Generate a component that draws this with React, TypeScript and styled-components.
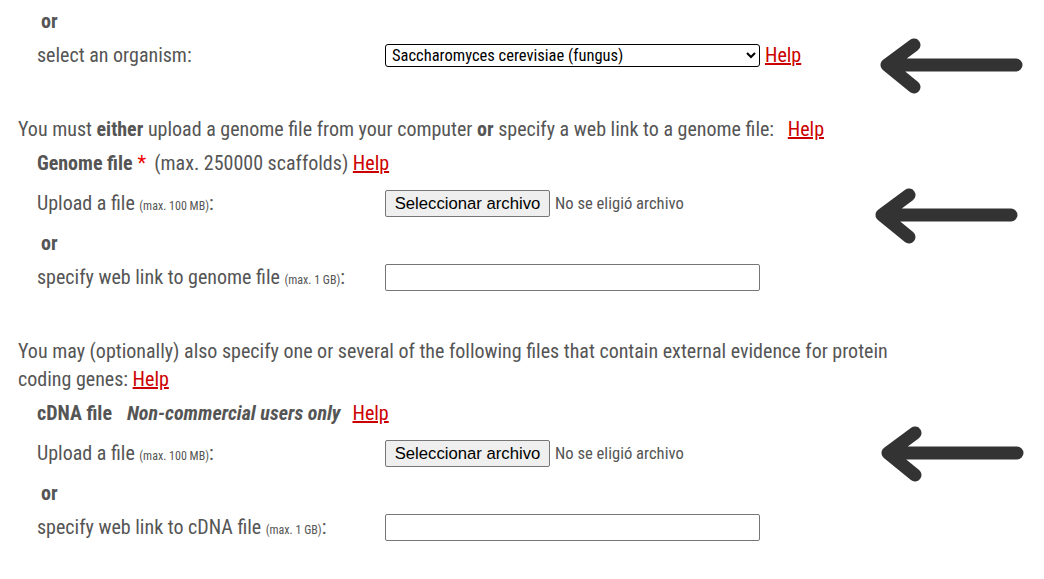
import React from "react";
import styled, { createGlobalStyle } from "styled-components";

const Global = createGlobalStyle`
  html, body { margin: 0; padding: 0; background: #fff; }
  body { font-family: "Roboto", "Liberation Sans", sans-serif; }
`;

const Page = styled.div`
  position: relative;
  width: 1044px;
  height: 579px;
  overflow: hidden;
  padding: 4px 0 0 18px;
  box-sizing: border-box;
  font-family: "Roboto", sans-serif;
  font-stretch: 80%;
  font-size: 20px;
  color: #555;
`;

const Form = styled.div`
  width: 880px;
  display: flex;
  flex-direction: column;
`;

const Row = styled.div<{ $spaced?: boolean }>`
  display: grid;
  grid-template-columns: 348px 1fr;
  align-items: center;
  height: 34px;
  padding-left: 19px;
  margin: ${(p) => (p.$spaced ? "6px 0" : "0")};
`;

const Heading = styled.div`
  display: flex;
  align-items: center;
  height: 34px;
  padding-left: 19px;
  white-space: pre;
`;

const Or = styled.div`
  font-weight: 700;
  padding-left: 4px;
`;

const Label = styled.span``;

const Small = styled.span`
  font-size: 12px;
`;

const Para = styled.p<{ $top: number }>`
  margin: ${(p) => p.$top}px 0 3px;
  line-height: 28px;
`;

const Strong = styled.b`
  font-weight: 700;
`;

const Help = styled.a`
  color: #cc0000;
  text-decoration: underline;
  cursor: pointer;
`;

const Star = styled.span`
  color: #e00;
  margin: 0 8px 0 5px;
`;

const Em = styled.i`
  font-weight: 700;
  margin: 0 12px 0 15px;
`;

const Control = styled.div`
  display: flex;
  align-items: center;
  gap: 5px;
`;

const Select = styled.select`
  width: 375px;
  height: 23px;
  font-family: "Roboto", sans-serif;
  font-stretch: 80%;
  font-size: 16.5px;
  color: #000;
  border: 1.5px solid #000;
  border-radius: 3px;
  background: #fff;
  padding: 0 2px;
`;

const FileButton = styled.button`
  height: 27px;
  width: 165px;
  padding: 1px 0 0;
  font-family: "Liberation Sans", Arial, sans-serif;
  font-size: 16.7px;
  color: #000;
  background: #efefef;
  border: 1px solid #767676;
  border-radius: 2px;
`;

const NoFile = styled.span`
  font-size: 16.6px;
  color: #555;
`;

const TextInput = styled.input`
  width: 375px;
  height: 27px;
  box-sizing: border-box;
  border: 1px solid #767676;
  border-radius: 2px;
  background: #fff;
`;

const Arrow = styled.svg<{ $x: number; $y: number }>`
  position: absolute;
  left: ${(p) => p.$x}px;
  top: ${(p) => p.$y}px;
  width: 160px;
  height: 80px;
  overflow: visible;
`;

const ArrowIcon = ({ x, y }: { x: number; y: number }) => (
  <Arrow $x={x} $y={y} viewBox="0 0 160 80">
    <path
      d="M34 7 L7 27 L34 49 M7 27 L136 27"
      fill="none"
      stroke="#333"
      strokeWidth={13}
      strokeLinecap="round"
      strokeLinejoin="round"
    />
  </Arrow>
);

const FileRow = () => (
  <Control>
    <FileButton type="button">Seleccionar archivo</FileButton>
    <NoFile>No se eligió archivo</NoFile>
  </Control>
);

export default function App() {
  return (
    <Page>
      <Global />
      <Form>
        <Row>
          <Or>or</Or>
        </Row>
        <Row>
          <Label>select an organism:</Label>
          <Control>
            <Select defaultValue="sc">
              <option value="sc">Saccharomyces cerevisiae (fungus)</option>
            </Select>
            <Help>Help</Help>
          </Control>
        </Row>

        <Para $top={43}>
          You must <Strong>either</Strong> upload a genome file from your computer{" "}
          <Strong>or</Strong> specify a web link to a genome file: &nbsp;&nbsp;<Help>Help</Help>
        </Para>
        <Heading>
          <Strong>Genome file</Strong>
          <Star>*</Star>
          {"(max. 250000 scaffolds) "}
          <Help>Help</Help>
        </Heading>
        <Row $spaced>
          <Label>
            Upload a file <Small>(max. 100 MB)</Small>:
          </Label>
          <FileRow />
        </Row>
        <Row>
          <Or>or</Or>
        </Row>
        <Row>
          <Label>
            specify web link to genome file <Small>(max. 1 GB)</Small>:
          </Label>
          <Control>
            <TextInput type="text" />
          </Control>
        </Row>

        <Para $top={43}>
          You may (optionally) also specify one or several of the following files that contain
          external evidence for protein coding genes: <Help>Help</Help>
        </Para>
        <Heading>
          <Strong>cDNA file</Strong>
          <Em>Non-commercial users only</Em>
          <Help>Help</Help>
        </Heading>
        <Row $spaced>
          <Label>
            Upload a file <Small>(max. 100 MB)</Small>:
          </Label>
          <FileRow />
        </Row>
        <Row>
          <Or>or</Or>
        </Row>
        <Row>
          <Label>
            specify web link to cDNA file <Small>(max. 1 GB)</Small>:
          </Label>
          <Control>
            <TextInput type="text" />
          </Control>
        </Row>
      </Form>
      <ArrowIcon x={880} y={38} />
      <ArrowIcon x={875} y={188} />
      <ArrowIcon x={881} y={426} />
    </Page>
  );
}
